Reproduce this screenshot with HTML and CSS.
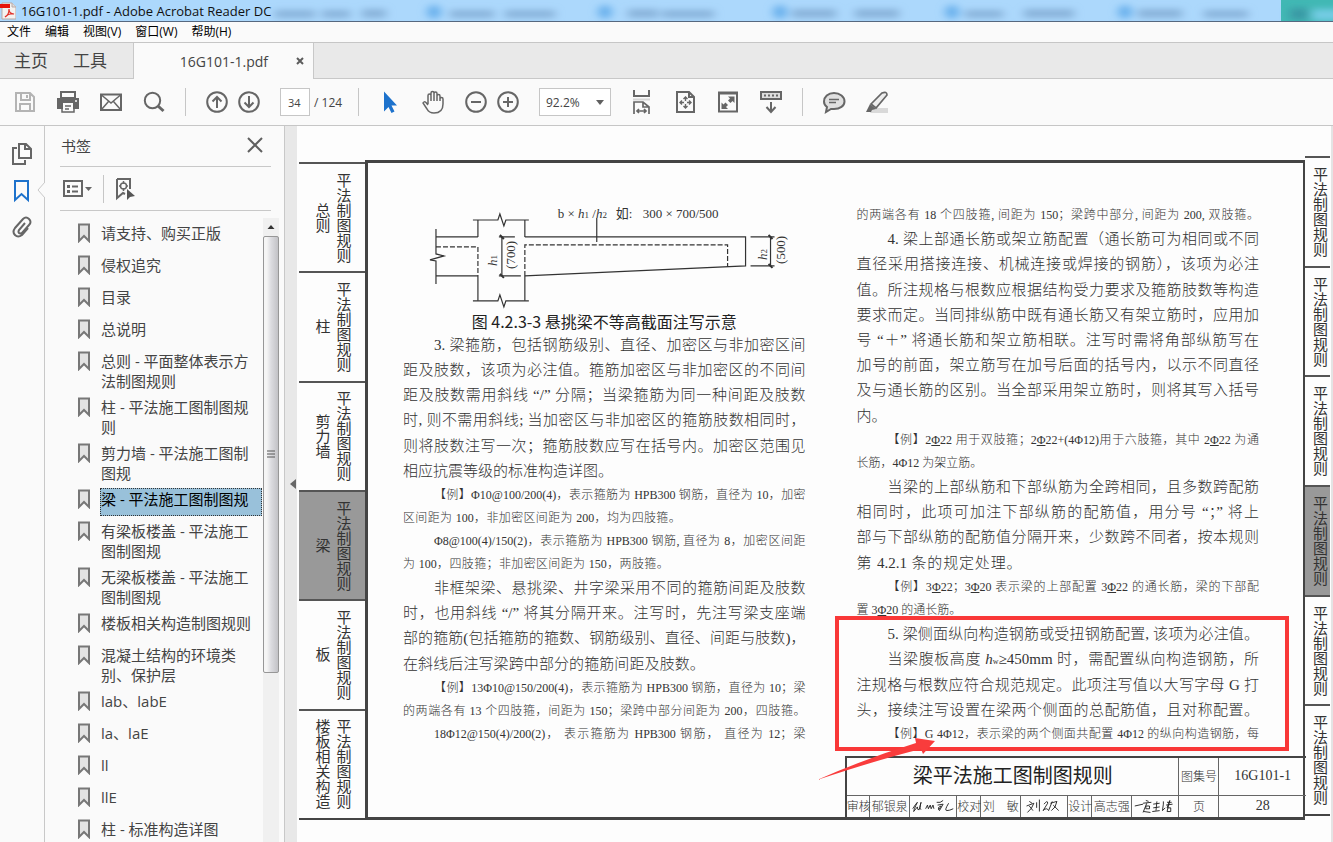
FILE: index.html
```html
<!DOCTYPE html>
<html lang="zh-CN">
<head>
<meta charset="utf-8">
<title>16G101-1.pdf - Adobe Acrobat Reader DC</title>
<link rel="stylesheet" href="styles.css">
</head>
<body>
<svg class="defs" width="0" height="0" aria-hidden="true">
  <symbol id="mark" viewBox="0 0 14 20"><path d="M2 1.5h10V18L7 13l-5 5z" fill="#e3e3e3" stroke="#777" stroke-width="2"/></symbol>
</svg>

<header class="titlebar">
  <svg class="glass" viewBox="0 0 1333 21" preserveAspectRatio="none" aria-hidden="true">
    <defs><filter id="soft" x="-10%" y="-80%" width="120%" height="260%"><feGaussianBlur stdDeviation="5 3"/></filter></defs>
    <rect x="1281" width="60" height="21" fill="#41b8b4"/>
    <g filter="url(#soft)">
      <g fill="#7fa9d2" opacity=".8">
        <path d="M275 10h40v8h-40zM322 10h28v8h-28zM362 9h24v9h-24zM450 10h44v8h-44zM505 10h50v8h-50zM628 9h30v9h-30zM662 10h52v8h-52zM792 9h44v9h-44zM855 9h44v9h-44zM965 10h38v8h-38zM1024 9h50v9h-50zM1138 9h44v9h-44zM1204 10h44v8h-44z"/>
      </g>
      <g fill="#69b0ec"><circle cx="434" cy="12" r="7"/><circle cx="605" cy="12" r="7"/><circle cx="780" cy="12" r="7"/><circle cx="952" cy="12" r="7"/><circle cx="1125" cy="12" r="7"/></g>
      <rect x="1290" y="8" width="18" height="12" fill="#3a99a5"/><rect x="1312" y="9" width="30" height="12" fill="#73cce4"/>
    </g>
  </svg>
  <svg class="logo" viewBox="0 0 16 18" aria-hidden="true"><path d="M2 1h10l4 4v12H2z" fill="#f4f2f0" stroke="#b9a9a5"/><path d="M12 1v4h4" fill="#ddd" stroke="#b9a9a5"/><path d="M0 2h10v4H0z" fill="#e6130b"/><path d="M5 15c2-1 4-4 4-8 0 3 2 5 5 5-3-1-7 1-9 3" fill="none" stroke="#e03028" stroke-width="1.2"/></svg>
  <span>16G101-1.pdf - Adobe Acrobat Reader DC</span>
</header>

<nav class="menu"><button>文件</button><button>编辑</button><button>视图(V)</button><button>窗口(W)</button><button>帮助(H)</button></nav>

<div class="tabs">
  <button class="home">主页</button><button class="home">工具</button>
  <div class="doc-tab"><span>16G101-1.pdf</span><button aria-label="关闭标签"><svg viewBox="0 0 8 8" width="8" height="8"><path d="M1 1l6 6M7 1L1 7" stroke="#5c5c5c" stroke-width="2"/></svg></button></div>
</div>

<div class="toolbar">
  <button aria-label="保存" class="dim"><svg viewBox="0 0 24 24"><path d="M3 3h14l4 4v14H3z M8 3v7h9V4M7 21v-7h10v7"/><path d="M14 5v3"/></svg></button>
  <button aria-label="打印"><svg viewBox="0 0 24 24"><path d="M4 1h16v7H4zM1 8h22v11H1z" class="fill"/><path d="M6 3h12v4H6zM7 13h10v8H7z" class="paper"/><path d="M6 13v9h12v-9M9 16h6M9 19h4" stroke-width="1.500"/><path d="M19 11h2" stroke="#fafafa" stroke-width="1.500"/></svg></button>
  <button aria-label="邮件"><svg viewBox="0 0 24 24"><path d="M2 4.500h20v15.500H2z"/><path d="M2.500 5l9.500 8 9.500-8M2.500 19.500l7-8M21.500 19.500l-7-8" stroke-width="1.500"/></svg></button>
  <button aria-label="搜索"><svg viewBox="0 0 24 24"><circle cx="10.500" cy="10.500" r="7.700"/><path d="M16 16l5.500 5" stroke-width="3"/></svg></button>
  <i class="sep"></i>
  <div class="pair">
    <button aria-label="上一页"><svg viewBox="0 0 24 24"><circle cx="12" cy="12" r="9.800"/><path d="M12 18V7M7.500 11.500L12 7l4.500 4.500"/></svg></button>
    <button aria-label="下一页"><svg viewBox="0 0 24 24"><circle cx="12" cy="12" r="9.800"/><path d="M12 6v11M7.500 12.500L12 17l4.500-4.500"/></svg></button>
  </div>
  <div class="pages"><input id="page" value="34" aria-label="页码"><label for="page">/ 124</label></div>
  <i class="sep"></i>
  <button aria-label="选择"><svg viewBox="0 0 24 24"><path d="M6 1.500v20l4.500-4.500 3 6 3-1.500-3-6H19z" fill="#1d72cc" stroke="none"/></svg></button>
  <button aria-label="手形工具"><svg viewBox="0 0 24 24"><path d="M7 14V5.500q0-1.500 1.500-1.500t1.500 1.500V11M10 5V3q0-1.500 1.500-1.500T13 3v8M13 3.500q0-1.500 1.500-1.500T16 3.500V11M16 6q0-1.500 1.500-1.500T19 6v5M19 9q0-1.500 1.500-1.500T22 9v5q0 9-9 9-5 0-7-4l-4-6q1-2 3-.5l2 2.500" stroke-width="1.500"/></svg></button>
  <div class="pair">
    <button aria-label="缩小"><svg viewBox="0 0 24 24"><circle cx="12" cy="12" r="9.800"/><path d="M7 12h10"/></svg></button>
    <button aria-label="放大"><svg viewBox="0 0 24 24"><circle cx="12" cy="12" r="9.800"/><path d="M7 12h10M12 7v10"/></svg></button>
  </div>
  <div class="zoom"><select aria-label="缩放比例"><option>92.2%</option></select><svg viewBox="0 0 8 5" width="8" height="5" aria-hidden="true"><path d="M0 0h8L4 5z" fill="#606060"/></svg></div>
  <button aria-label="适合宽度"><svg viewBox="0 0 24 24"><path d="M4 0v6h15V0"/><path d="M3 9.500h17" stroke="#d5d5d5"/><path d="M4 24V12h9l6 5v7M13 12v5h6M7 21h9M9 19l-2 2 2 2M14 19l2 2-2 2" stroke-width="1.700"/></svg></button>
  <button aria-label="适合页面"><svg viewBox="0 0 24 24"><path d="M4 2h12l5 5v15H4zM16 2v5h5"/><path d="M12.500 7v11M7 12.500h11M10.500 9l2-2 2 2M10.500 16l2 2 2-2M9 10.500l-2 2 2 2M16 10.500l2 2-2 2" stroke-width="1.400"/><path d="M12.500 11v3M11 12.500h3" stroke="#fafafa"/></svg></button>
  <button aria-label="全屏"><svg viewBox="0 0 24 24"><path d="M3 2.500h18v19H3zM3 3.500h18"/><path d="M18.500 6.500v6.500l-2-2-2 2-2.500-2.500 2-2-2-2zM5.500 19v-6.500l2 2 2-2L12 15l-2 2 2 2z" class="fill"/></svg></button>
  <button aria-label="工具栏"><svg viewBox="0 0 24 24"><path d="M2 2h20v7H2z" fill="#ddd"/><path d="M5 5.500h14" stroke-dasharray="2 2"/><path d="M12 12v9M7.500 17l4.500 5 4.500-5"/></svg></button>
  <i class="sep"></i>
  <button aria-label="注释"><svg viewBox="0 0 24 24"><path d="M4 22l1-5q-3-2-3-5.500C2 7 6 3 12 3s10.500 4 10.500 8.500S18 19 12 19H9z" fill="#e0e0e0"/><path d="M7 9.500h10M7 12.500h7" stroke-width="1.400"/></svg></button>
  <button aria-label="高亮"><svg viewBox="0 0 24 24"><path d="M8 18h15v5H5z" fill="#d9d9d9" stroke="none"/><path d="M6 14L17 3q5-2 5 2L11 18z" fill="#ededed" stroke-width="1.700"/><path d="M5 14l6 5-4 1-1 2H1z" class="fill"/></svg></button>
</div>

<div class="work">
  <nav class="rail">
    <button aria-label="页面缩略图"><svg viewBox="0 0 22 24"><path d="M8 2h7l5 5v9H8zM14 2v5h6M6 6H2v16h12v-4"/></svg></button>
    <button aria-label="书签"><svg viewBox="0 0 22 24"><path d="M4 2h13v19l-6.500-6L4 21z" stroke="#1d72cc"/></svg></button>
    <button aria-label="附件"><svg viewBox="0 0 22 24"><path d="M14 7l-6 7q-1 2 0 3t3 0l7-8q3-3 0-6t-6 0l-8 9q-3 4 0 7t7 0l6-7"/></svg></button>
    <svg class="notch" viewBox="0 0 8 16" width="8" height="16" aria-hidden="true"><path d="M8 0L1 8l7 8" fill="#fafafa" stroke="#c8c8c8"/></svg>
  </nav>

  <aside class="panel">
    <div class="panel-head"><h2>书签</h2><button aria-label="关闭"><svg viewBox="0 0 16 16" width="16" height="16"><path d="M1 1l14 14M15 1L1 15" stroke="#5f5f5f" stroke-width="2"/></svg></button></div>
    <div class="panel-tools">
      <button aria-label="选项"><svg viewBox="0 0 30 20" width="30" height="20"><path d="M2 2h18v15H2z" class="line"/><path d="M5 6h3v3H5zM5 11h3v3H5z" fill="#666"/><path d="M10 7.500h6M10 12.500h6" class="line"/><path d="M23 8h7l-3.500 4z" fill="#666"/></svg></button>
      <i class="sep"></i>
      <button aria-label="查找当前书签"><svg viewBox="0 0 22 24" width="22" height="24"><path d="M2 2h13v10M2 2v19l6-5 2 1" class="line"/><circle cx="8.500" cy="9" r="3" fill="none" stroke="#666" stroke-width="1.500"/><path d="M8.500 4v3M8.500 11v3M4 9h2M11 9h2" stroke="#666" stroke-width="1.500"/><path d="M12 12v11l3-3 5-1z" fill="#555"/></svg></button>
    </div>
    <div class="list-wrap">
      <ul class="list">
        <li><svg><use href="#mark"/></svg><a href="#">请支持、购买正版</a></li>
        <li><svg><use href="#mark"/></svg><a href="#">侵权追究</a></li>
        <li><svg><use href="#mark"/></svg><a href="#">目录</a></li>
        <li><svg><use href="#mark"/></svg><a href="#">总说明</a></li>
        <li><svg><use href="#mark"/></svg><a href="#">总则 - 平面整体表示方法制图规则</a></li>
        <li><svg><use href="#mark"/></svg><a href="#">柱 - 平法施工图制图规则</a></li>
        <li><svg><use href="#mark"/></svg><a href="#">剪力墙 - 平法施工图制图规</a></li>
        <li><svg><use href="#mark"/></svg><a href="#" class="current">梁 - 平法施工图制图规</a></li>
        <li><svg><use href="#mark"/></svg><a href="#">有梁板楼盖 - 平法施工图制图规</a></li>
        <li><svg><use href="#mark"/></svg><a href="#">无梁板楼盖 - 平法施工图制图规</a></li>
        <li><svg><use href="#mark"/></svg><a href="#">楼板相关构造制图规则</a></li>
        <li><svg><use href="#mark"/></svg><a href="#">混凝土结构的环境类别、保护层</a></li>
        <li><svg><use href="#mark"/></svg><a href="#">lab、labE</a></li>
        <li><svg><use href="#mark"/></svg><a href="#">la、laE</a></li>
        <li><svg><use href="#mark"/></svg><a href="#">ll</a></li>
        <li><svg><use href="#mark"/></svg><a href="#">llE</a></li>
        <li><svg><use href="#mark"/></svg><a href="#">柱 - 标准构造详图</a></li>
      </ul>
      <div class="scroll" aria-hidden="true">
        <svg viewBox="0 0 16 18" width="16" height="18"><path d="M4.500 11h7L8 7z" fill="#333"/></svg>
        <div class="thumb"><svg viewBox="0 0 8 8" width="8" height="8"><path d="M0 1h8M0 4h8M0 7h8" stroke="#555"/></svg></div>
      </div>
    </div>
  </aside>

  <button class="collapse" aria-label="收起面板"><svg viewBox="0 0 6 10" width="6" height="10"><path d="M6 0v10L0 5z" fill="#666"/></svg></button>

  <main class="page">
    <div class="side left">
      <div><span>总则</span><span>平法制图规则</span></div>
      <div><span>柱</span><span>平法制图规则</span></div>
      <div><span>剪力墙</span><span>平法制图规则</span></div>
      <div class="on"><span>梁</span><span>平法制图规则</span></div>
      <div><span>板</span><span>平法制图规则</span></div>
      <div><span>楼板相关构造</span><span>平法制图规则</span></div>
    </div>

    <div class="frame">
      <div class="columns">
        <article class="col">
          <svg class="figure" viewBox="0 0 403 106" role="img" aria-label="悬挑梁截面">
            <g fill="none" stroke="#333" stroke-width="1.200">
              <path d="M33 25v25l8 2-14 4 6 1v23M33 33h42M33 72h42M75 16v17M75 72v25M122 16v17M122 72v25"/>
              <path d="M70 16h25l2-6 4 12 2-6h23M70 97h25l2-6 4 12 2-6h23"/>
              <path d="M122 33h221v29L122 72M194 14v24M99 33v39M96 33h16M96 72h22M368 33v29M348 33h24M348 62h24"/>
              <path d="M97 31l4 4M97 70l4 4M366 31l4 4M366 60l4 4" stroke-width="2"/>
              <path d="M33 43h42v29M122 72V41h203v22" stroke-dasharray="5 2"/>
            </g>
            <g class="figure-text">
              <text x="155" y="14">b × <tspan class="it">h</tspan><tspan class="sub">1</tspan> /<tspan class="it">h</tspan><tspan class="sub">2</tspan></text>
              <text x="213" y="14">如:</text><text x="240" y="14">300 × 700/500</text>
              <text transform="translate(94 62) rotate(-90)"><tspan class="it">h</tspan><tspan class="sub">1</tspan></text>
              <text transform="translate(112 65) rotate(-90)">(700)</text>
              <text transform="translate(364 56) rotate(-90)"><tspan class="it">h</tspan><tspan class="sub">2</tspan></text>
              <text transform="translate(382 60) rotate(-90)">(500)</text>
            </g>
          </svg>
          <h3>图 4.2.3-3 悬挑梁不等高截面注写示意</h3>
          <p class="in">3. 梁箍筋，包括钢筋级别、直径、加密区与非加密区间</p>
          <p>距及肢数，该项为必注值。箍筋加密区与非加密区的不同间</p>
          <p>距及肢数需用斜线 “/” 分隔；当梁箍筋为同一种间距及肢数</p>
          <p>时, 则不需用斜线; 当加密区与非加密区的箍筋肢数相同时，</p>
          <p>则将肢数注写一次；箍筋肢数应写在括号内。加密区范围见</p>
          <p class="w52">相应抗震等级的标准构造详图。</p>
          <p class="ex in">【例】Φ10@100/200(4)，表示箍筋为 HPB300 钢筋，直径为 10，加密</p>
          <p class="ex w69">区间距为 100，非加密区间距为 200，均为四肢箍。</p>
          <p class="ex in">Φ8@100(4)/150(2)，表示箍筋为 HPB300 钢筋, 直径为 8，加密区间距</p>
          <p class="ex w66">为 100，四肢箍；非加密区间距为 150，两肢箍。</p>
          <p class="in">非框架梁、悬挑梁、井字梁采用不同的箍筋间距及肢数</p>
          <p>时，也用斜线 “/” 将其分隔开来。注写时，先注写梁支座端</p>
          <p>部的箍筋(包括箍筋的箍数、钢筋级别、直径、间距与肢数)，</p>
          <p class="w75">在斜线后注写梁跨中部分的箍筋间距及肢数。</p>
          <p class="ex in">【例】13Φ10@150/200(4)，表示箍筋为 HPB300 钢筋，直径为 10；梁</p>
          <p class="ex">的两端各有 13 个四肢箍，间距为 150；梁跨中部分间距为 200，四肢箍。</p>
          <p class="ex in">18Φ12@150(4)/200(2)， 表示箍筋为 HPB300 钢筋， 直径为 12；梁</p>
        </article>

        <article class="col">
          <p class="ex">的两端各有 18 个四肢箍, 间距为 150；梁跨中部分, 间距为 200, 双肢箍。</p>
          <p class="in">4. 梁上部通长筋或架立筋配置（通长筋可为相同或不同</p>
          <p>直径采用搭接连接、机械连接或焊接的钢筋），该项为必注</p>
          <p>值。所注规格与根数应根据结构受力要求及箍筋肢数等构造</p>
          <p>要求而定。当同排纵筋中既有通长筋又有架立筋时，应用加</p>
          <p>号 “＋” 将通长筋和架立筋相联。注写时需将角部纵筋写在</p>
          <p>加号的前面，架立筋写在加号后面的括号内，以示不同直径</p>
          <p>及与通长筋的区别。当全部采用架立筋时，则将其写入括号</p>
          <p class="start">内。</p>
          <p class="ex in">【例】2<u>Φ</u>22 用于双肢箍；2<u>Φ</u>22+(4Φ12)用于六肢箍，其中 2<u>Φ</u>22 为通</p>
          <p class="ex w31">长筋，4Φ12 为架立筋。</p>
          <p class="in">当梁的上部纵筋和下部纵筋为全跨相同，且多数跨配筋</p>
          <p>相同时，此项可加注下部纵筋的配筋值，用分号 “；” 将上</p>
          <p>部与下部纵筋的配筋值分隔开来，少数跨不同者，按本规则</p>
          <p class="w41">第 4.2.1 条的规定处理。</p>
          <p class="ex in">【例】3<u>Φ</u>22；3<u>Φ</u>20 表示梁的上部配置 3<u>Φ</u>22 的通长筋，梁的下部配</p>
          <p class="ex w26">置 3<u>Φ</u>20 的通长筋。</p>
          <p class="in">5. 梁侧面纵向构造钢筋或受扭钢筋配置, 该项为必注值。</p>
          <p class="in">当梁腹板高度 <em>h</em><small>w</small>≥450mm 时，需配置纵向构造钢筋，所</p>
          <p>注规格与根数应符合规范规定。此项注写值以大写字母 G 打</p>
          <p>头，接续注写设置在梁两个侧面的总配筋值，且对称配置。</p>
          <p class="ex in">【例】G 4Φ12，表示梁的两个侧面共配置 4Φ12 的纵向构造钢筋，每</p>
          <div class="callout"></div>
        </article>
      </div>

      <div class="block">
        <table>
          <colgroup><col class="c24"><col class="c40"><col class="c47"><col class="c24"><col class="c40"><col class="c47"><col class="c24"><col class="c40"><col class="c47"><col class="c40"><col class="c87"></colgroup>
          <tr class="big"><th colspan="9">梁平法施工图制图规则</th><td>图集号</td><td class="num">16G101-1</td></tr>
          <tr><td>审核</td><td>郁银泉</td>
            <td class="sig"><svg viewBox="0 0 50 20"><path d="M3 13q3-5 5-7-4 8-4 10l4-5q0 4 2 3l2-8q-2 7 0 8M17 13l2-4 1 4 2-4 1 4 2-4 1 4M29 6q4 1 7-2M30 9l6-1-4 7q-3-4 2-5l-3 4M42 7q-5 8-2 8t7-2"/></svg></td>
            <td>校对</td><td>刘　敏</td>
            <td class="sig"><svg viewBox="0 0 50 20"><path d="M9 5l3 2M6 10l8-3q-2 6-7 10M9 10l4 5M17 6v6M20 3v13M25 8q4-5 4-1l-5 8q4-4 6 0l4-10M32 7l7-2q-1 7-6 10M35 9l6 6"/></svg></td>
            <td>设计</td><td>高志强</td>
            <td class="sig"><svg viewBox="0 0 50 20"><path d="M3 10l9-2M15 4l3 1M12 7l9-1M16 7l-4 10M15 10h4v3h-4zM13 16l7 1M27 5l-1 10M23 8l7-1M23 12l7-1M22 16l8-1M34 5v3l-1 7 3-3M38 6h5M37 9l7-1M41 4l-3 8h4v4h-4z"/></svg></td>
            <td>页</td><td class="num">28</td></tr>
        </table>
        <svg class="arrow" viewBox="0 0 120 44" width="120" height="44" aria-hidden="true"><path d="M0 42Q50 20 99 5l-1-5 20 3-12 13-2-5Q60 22 0 42z" fill="#f93c3c"/></svg>
      </div>
    </div>

    <div class="side right">
      <div><span>平法制图规则</span></div><div><span>平法制图规则</span></div><div><span>平法制图规则</span></div>
      <div class="on"><span>平法制图规则</span></div><div><span>平法制图规则</span></div><div><span>平法制图规则</span></div>
    </div>
  </main>
</div>
</body>
</html>
```
FILE: styles.css
```css
* { box-sizing: border-box; }
html, body { height: 100%; margin: 0; }
body {
  display: flex;
  flex-direction: column;
  overflow: hidden;
  background: #fafafa;
  color: #444;
  font-family: "Open Sans", "Noto Sans CJK SC", sans-serif;
  font-size: 12px;
}
button { padding: 0; border: 0; background: none; color: inherit; font: inherit; }
h2, h3, p, ul { margin: 0; padding: 0; font-weight: 400; }
.defs { position: absolute; }

.titlebar {
  position: relative;
  display: flex;
  align-items: center;
  gap: 5px;
  flex: none;
  height: 22px;
  border-bottom: 1px solid #56687f;
  background: #acd8fc;
  color: #111;
  font-size: 13px;
  line-height: 20px;
}
.titlebar span, .logo { position: relative; }
.logo { width: 16px; height: 18px; }
.glass { position: absolute; inset: 0; width: 100%; height: 100%; }

.menu {
  display: flex;
  gap: 14px;
  flex: none;
  height: 21px;
  padding: 0 7px 2px;
  border-bottom: 1px solid #c6c6c6;
  color: #000;
}

.tabs {
  display: flex;
  flex: none;
  height: 36px;
  padding-left: 14px;
  border-bottom: 1px solid #c8c8c8;
  background: #e9e9e9;
}
.home { margin-right: 25px; padding-bottom: 2px; color: #444; font-size: 17px; }
.doc-tab {
  display: flex;
  align-items: center;
  justify-content: flex-end;
  gap: 28px;
  width: 181px;
  height: 36px;
  margin-left: 1px;
  padding-right: 9px;
  border: solid #c8c8c8;
  border-width: 0 1px;
  background: #fafafa;
  font-size: 14px;
}
.doc-tab button { display: flex; }

.toolbar {
  display: flex;
  align-items: center;
  gap: 19px;
  flex: none;
  height: 47px;
  padding-left: 13px;
  border-bottom: 1px solid #c6c6c6;
}
.toolbar button { flex: none; width: 24px; height: 24px; }
.toolbar button svg { display: block; width: 24px; height: 24px; fill: none; stroke: #666; stroke-width: 2; }
.toolbar .dim svg { stroke: #b4b4b4; }
.toolbar .fill { fill: #666; stroke: none; }
.toolbar .paper { fill: #fafafa; stroke: none; }
.sep { flex: none; width: 1px; height: 28px; background: #c6c6c6; }
.pair { display: flex; gap: 8px; }
.pages { display: flex; align-items: center; gap: 4px; width: 59px; font-size: 12px; white-space: nowrap; }
.pages input {
  width: 30px;
  height: 28px;
  padding: 0 0 0 7px;
  border: 1px solid #c6c6c6;
  background: #fff;
  color: #444;
  font: inherit;
  font-size: 11px;
}
.zoom { position: relative; width: 72px; }
.zoom select {
  width: 72px;
  height: 28px;
  padding: 0 6px;
  border: 1px solid #c6c6c6;
  border-radius: 0;
  background: #fff;
  color: #444;
  font: inherit;
  appearance: none;
}
.zoom svg { position: absolute; right: 7px; top: 12px; }

.work { display: flex; flex: 1; min-height: 0; }
.rail {
  position: relative;
  display: flex;
  flex-direction: column;
  align-items: center;
  gap: 13px;
  flex: none;
  width: 45px;
  padding-top: 16px;
  border-right: 1px solid #c8c8c8;
}
.rail button svg { display: block; width: 22px; height: 24px; fill: none; stroke: #666; stroke-width: 2; }
.notch { position: absolute; right: -1px; top: 56px; }

.panel {
  display: flex;
  flex-direction: column;
  flex: none;
  width: 240px;
  padding: 0 5px 0 15px;
  border-right: 1px solid #c8c8c8;
}
.panel-head {
  display: flex;
  align-items: center;
  justify-content: space-between;
  height: 41px;
  margin-right: 8px;
  padding: 0 8px 2px 1px;
  border-bottom: 1px solid #c8c8c8;
}
.panel-head h2 { font-size: 15px; }
.panel-head button, .panel-tools button { display: flex; }
.panel-tools {
  display: flex;
  align-items: center;
  gap: 11px;
  height: 44px;
  margin-right: 8px;
  padding-left: 2px;
  border-bottom: 1px solid #c8c8c8;
}
.panel-tools .line { fill: none; stroke: #666; stroke-width: 2; }
.list-wrap { display: flex; flex: 1; min-height: 0; padding-top: 7px; }
.list { flex: 1; padding: 4px 1px 0 17px; overflow: hidden; list-style: none; }
.list li { display: flex; gap: 9px; margin-bottom: 4px; }
.list svg { flex: none; width: 14px; height: 20px; margin-top: 1px; }
.list a {
  flex: 1;
  min-height: 28px;
  padding: 1px 0 1px 1px;
  color: #444;
  font-size: 15px;
  line-height: 20px;
  text-decoration: none;
}
.list .current { background: #99c1da; color: #000; outline: 1px dotted #333; outline-offset: -1px; }
.scroll { display: flex; flex-direction: column; width: 16px; background: #f0f0f0; }
.thumb {
  display: flex;
  align-items: center;
  justify-content: center;
  height: 70%;
  border: 1px solid #979797;
  border-radius: 2px;
  background: linear-gradient(90deg, #f5f5f5 20%, #dcdce0 50%, #c2c2c6);
}

.collapse { flex: none; width: 12px; padding: 0 0 0 3px; background: #e8e8e8; }

.page {
  display: grid;
  grid-template-columns: 66px 1fr 25px;
  flex: 1;
  min-width: 0;
  padding: 30px 1px 22px 2px;
  border-right: 2px solid #e4e4e4;
  background: #fdfdfd;
  color: #333;
}
.side { display: flex; flex-direction: column; }
.side.left { margin-top: 6px; }
.side.right { margin-bottom: 4px; }
.side div {
  display: flex;
  align-items: center;
  justify-content: center;
  gap: 5px;
  flex: 1;
  padding-left: 2px;
  border-top: 2px solid #555;
  font-size: 15px;
  line-height: 16px;
}
.side.right div { padding-left: 5px; }
.side div:last-child { border-bottom: 2px solid #444; }
.side .on { background: #999; }
.side span { writing-mode: vertical-rl; }

.frame {
  display: flex;
  flex-direction: column;
  margin-top: 4px;
  border: 3px solid #444;
  border-width: 3px 2px 3px 3px;
}
.columns {
  display: grid;
  grid-template-columns: 1fr 1fr;
  gap: 51px;
  flex: 1;
  padding: 41px 44px 10px 35px;
}
.col {
  position: relative;
  display: flex;
  flex-direction: column;
  justify-content: space-between;
  min-width: 0;
  font-family: "Liberation Serif", "Noto Sans CJK SC", serif;
}
.col p {
  font-size: 15px;
  font-weight: 300;
  line-height: 25px;
  text-align: justify;
  text-align-last: justify;
  white-space: nowrap;
}
.col .ex { font-size: 12px; line-height: 23px; }
.col .in { padding-left: 31px; }
.col .start { text-align-last: left; }
.w26 { width: 26%; }
.w31 { width: 31%; }
.w41 { width: 41%; }
.w52 { width: 52%; }
.w66 { width: 66%; }
.w69 { width: 69%; }
.w75 { width: 75%; }
.col small { font-size: 8px; line-height: 1; }
.figure { display: block; width: 100%; overflow: visible; }
.figure-text { font-size: 13px; fill: #333; }
.figure-text .it { font-style: italic; }
.figure-text .sub { font-size: 9px; }
.col h3 {
  color: #222;
  font-family: "Noto Sans CJK SC", sans-serif;
  font-size: 16px;
  line-height: 23px;
  text-align: center;
}
.callout {
  position: absolute;
  right: -30px;
  bottom: -5px;
  left: -22px;
  height: 135px;
  border: 4px solid #f93838;
}

.block { position: relative; width: 49%; margin-left: auto; }
.block table {
  width: 100%;
  border: solid #444;
  border-width: 2px 0 0 2px;
  border-collapse: collapse;
  table-layout: fixed;
}
.block td, .block th { height: 22px; padding: 0; border: 1px solid #666; font-weight: 300; text-align: center; white-space: nowrap; }
.block tr td:last-child { border-right: 0; }
.block tr:last-child td { border-bottom: 0; }
.block .big td, .block .big th { height: 38px; }
.block th { color: #222; font-size: 20px; font-weight: 400; line-height: 24px; }
.block .num { font-family: "Liberation Serif", serif; font-size: 14px; font-weight: 400; }
.c24 { width: 24px; }
.c40 { width: 40px; }
.c47 { width: 47px; }
.c87 { width: 87px; }
.sig svg { display: block; width: 100%; height: 20px; fill: none; stroke: #222; stroke-width: 1; }
.arrow { position: absolute; top: -18px; left: -28px; }
```
